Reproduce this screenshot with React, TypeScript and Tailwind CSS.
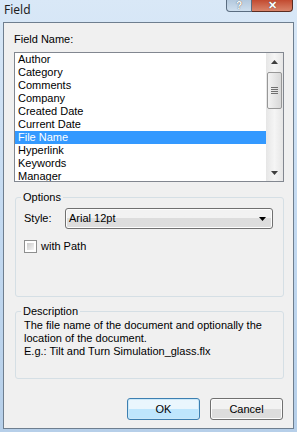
import React from 'react';

const fields = [
  'Author',
  'Category',
  'Comments',
  'Company',
  'Created Date',
  'Current Date',
  'File Name',
  'Hyperlink',
  'Keywords',
  'Manager',
];

const selectedField = 'File Name';

function ScrollArrow({ down }: { down?: boolean }) {
  return (
    <div className="flex h-[17px] items-center justify-center">
      <svg width="7" height="4" viewBox="0 0 7 4">
        <path d={down ? 'M0 0h7L3.5 4z' : 'M0 4h7L3.5 0z'} fill="#3f3f3f" />
      </svg>
    </div>
  );
}

function Scrollbar() {
  return (
    <div className="flex w-[17px] flex-col bg-gradient-to-r from-[#e6e6e6] via-[#f5f5f5] to-[#e6e6e6]">
      <ScrollArrow />
      {/* thumb with grip lines */}
      <div className="mx-[1px] mt-[2px] flex h-[37px] items-center justify-center rounded-[2px] border border-[#979797] bg-gradient-to-r from-[#f3f3f3] to-[#d8d8d8]">
        <div className="flex flex-col gap-[1px]">
          <div className="h-[1px] w-[7px] bg-[#6f6f6f]" />
          <div className="h-[1px] w-[7px] bg-[#6f6f6f]" />
          <div className="h-[1px] w-[7px] bg-[#6f6f6f]" />
          <div className="h-[1px] w-[7px] bg-[#6f6f6f]" />
        </div>
      </div>
      <div className="flex-1" />
      <ScrollArrow down />
    </div>
  );
}

function Button({ label, focused }: { label: string; focused?: boolean }) {
  return (
    <button
      className={`h-[22px] w-[73px] rounded-[3px] border text-[11px] text-black ${
        focused
          ? 'border-[#3c7fb1] bg-gradient-to-b from-[#eaf6fd] from-50% to-[#bee6fd] to-50% shadow-[inset_0_0_0_1px_#cbe8f8]'
          : 'border-[#707070] bg-gradient-to-b from-[#f2f2f2] from-50% to-[#dddddd] to-50% shadow-[inset_0_0_0_1px_#fcfcfc]'
      }`}
    >
      {label}
    </button>
  );
}

export default function App() {
  return (
    <div className="flex h-[432px] w-[297px] flex-col bg-gradient-to-b from-[#d9e8f7] via-[#c4daf1] to-[#b6cfe9] font-['Liberation_Sans',Arial,sans-serif] text-[11px] text-black">
      {/* Title bar */}
      <div className="flex h-[22px] items-start justify-between">
        <span className="pl-[4px] pt-[2px] font-['Noto_Sans',sans-serif] text-[12px] leading-[16px] text-[#1e1e1e]">
          Field
        </span>
        <div className="mr-[4px] flex">
          <div className="flex h-[12px] w-[26px] items-end justify-center rounded-bl-[4px] border border-t-0 border-[#5a6c80] bg-gradient-to-b from-[#b3c8dd] to-[#cfdfee] pb-[0px] text-[10px] font-bold leading-[11px] text-white [text-shadow:0_0_1px_#333]">
            ?
          </div>
          <div className="flex h-[12px] w-[41px] items-end justify-center rounded-br-[4px] border border-l-0 border-t-0 border-[#5a2c22] bg-gradient-to-b from-[#c24a30] to-[#d9846a] text-[11px] font-bold leading-[11px] text-white [text-shadow:0_0_1px_#222]">
            ✕
          </div>
        </div>
      </div>

      {/* Client area */}
      <div className="ml-[3px] flex h-[407px] w-[291px] flex-col border border-[#6e7e8f] bg-[#f0f0f0] pl-[10px] pr-[10px] pt-[10px]">
        <div className="leading-[13px]">Field Name:</div>

        <div className="mt-[6px] flex h-[130px] w-[270px] border border-[#828790] bg-white">
          <div className="flex-1 overflow-hidden">
            {fields.map((f) => (
              <div
                key={f}
                className={`h-[13px] pl-[3px] leading-[13px] ${
                  f === selectedField ? 'bg-[#3399ff] text-white' : ''
                }`}
              >
                {f}
              </div>
            ))}
          </div>
          <Scrollbar />
        </div>

        <fieldset className="ml-[1px] mt-[9px] h-[106px] w-[269px] rounded-[3px] border border-[#d5dfe5] px-[7px]">
          <legend className="ml-[-2px] px-[2px] leading-[13px]">Options</legend>
          <div className="mt-[4px] flex items-center">
            <span className="ml-[1px] w-[41px] leading-[13px]">Style:</span>
            <div className="flex h-[21px] w-[208px] items-center justify-between rounded-[3px] border border-[#707070] bg-gradient-to-b from-[#f2f2f2] from-50% to-[#dddddd] to-50% pl-[3px] pr-[6px] shadow-[inset_0_0_0_1px_#fcfcfc]">
              <span>Arial 12pt</span>
              <svg width="7" height="4" viewBox="0 0 7 4">
                <path d="M0 0h7L3.5 4z" fill="#000" />
              </svg>
            </div>
          </div>
          <div className="mt-[11px] flex items-center">
            <div className="ml-[1px] h-[13px] w-[13px] border border-[#8e8f8f] bg-white p-[2px]">
              <div className="h-full w-full bg-gradient-to-br from-[#cbcbcb] to-[#f6f6f6]" />
            </div>
            <span className="ml-[4px] leading-[13px]">with Path</span>
          </div>
        </fieldset>

        <fieldset className="ml-[1px] mt-[8px] h-[74px] w-[269px] rounded-[3px] border border-[#d5dfe5] px-[7px]">
          <legend className="ml-[-2px] px-[2px] leading-[13px]">Description</legend>
          <p className="ml-[1px] mt-[1px] w-[240px] leading-[13px]">
            The file name of the document and optionally the location of the document.
            <br />
            E.g.: Tilt and Turn Simulation_glass.flx
          </p>
        </fieldset>

        <div className="mt-[19px] flex justify-end gap-[10px] pr-[0px]">
          <Button label="OK" focused />
          <Button label="Cancel" />
        </div>
      </div>
    </div>
  );
}
